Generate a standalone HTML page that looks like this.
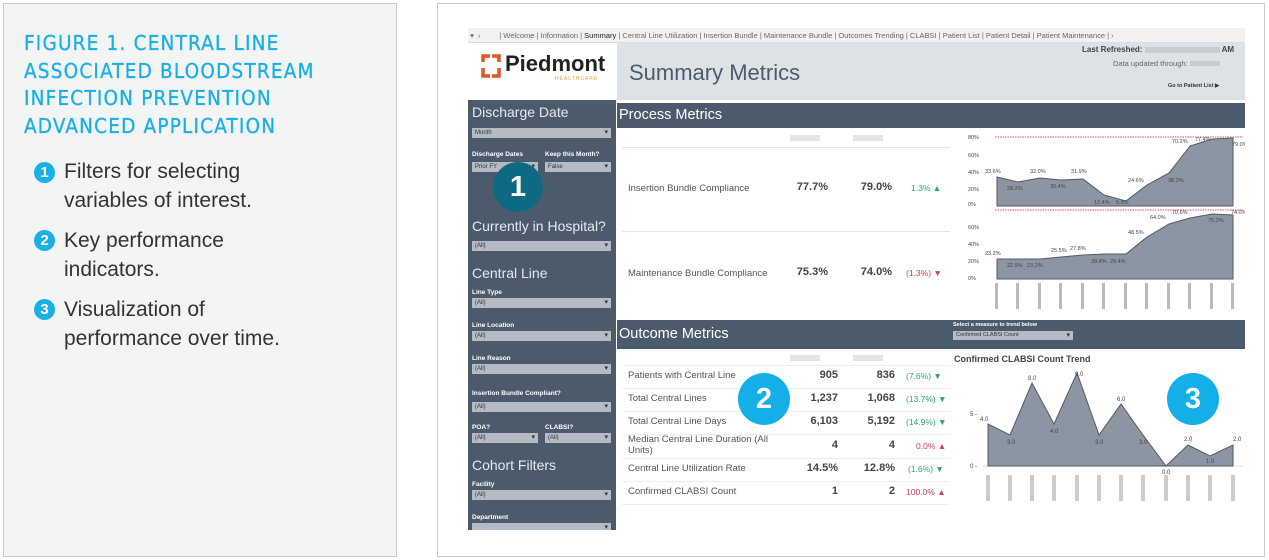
<!DOCTYPE html>
<html><head><meta charset="utf-8"><style>
*{margin:0;padding:0;box-sizing:border-box}
body{width:1269px;height:560px;background:#fff;position:relative;overflow:hidden;font-family:"Liberation Sans",sans-serif}
.a{position:absolute}
.lp{left:3px;top:3px;width:394px;height:554px;background:#f3f4f4;border:1px solid #c8cacb}
.ttl{left:24px;top:30px;color:#1ab0e6;font-size:20.5px;line-height:27.5px;letter-spacing:1.2px;font-family:"DejaVu Sans Condensed","Liberation Sans",sans-serif;-webkit-text-stroke:0.3px #1ab0e6}
.li{left:64px;color:#333;font-size:21px;line-height:29px}
.bul{left:34px;width:21px;height:21px;border-radius:50%;background:#1ab0e6;color:#fff;font-size:15px;font-weight:bold;text-align:center;line-height:21px}
.rp{left:437px;top:3px;width:828px;height:554px;border:1px solid #c8cacb;background:#fff}
.side{left:468px;top:100px;width:148px;height:430px;background:#4b5b6b}
.sh{color:#e6eaf0;font-size:14px;left:472px}
.sl{color:#fff;font-size:6.5px;font-weight:bold;left:472px}
.dd{background:#b4bbc3;height:10px;font-size:6px;color:#333;padding-left:3px;line-height:10px}
.dd:after{content:"▾";position:absolute;right:3px;font-size:7px}
.bar{background:#4b5b6b;color:#fff;font-size:14.5px;padding-left:2px}
.t{font-size:9.5px;color:#555}
.n{font-size:11px;font-weight:bold;color:#444;text-align:right}
.g{color:#2aa86a;font-size:8.5px}.r{color:#d04050;font-size:8.5px}
.ci{width:48px;height:48px;border-radius:50%;color:#fff;font-weight:bold;font-size:29px;text-align:center;line-height:48px}
.row{left:622px;width:328px;border-top:1px solid #eee;height:23px}
</style></head><body>
<div class="a lp"></div>
<div class="a ttl">FIGURE 1. CENTRAL LINE<br>ASSOCIATED BLOODSTREAM<br>INFECTION PREVENTION<br>ADVANCED APPLICATION</div>
<div class="a bul" style="top:162px">1</div><div class="a li" style="top:157px">Filters for selecting<br>variables of interest.</div>
<div class="a bul" style="top:230px">2</div><div class="a li" style="top:226px">Key performance<br>indicators.</div>
<div class="a bul" style="top:299px">3</div><div class="a li" style="top:295px">Visualization of<br>performance over time.</div>

<div class="a rp"></div>
<div class="a" style="left:468px;top:28px;width:777px;height:15px;background:#f2f2f2;border-bottom:1px solid #ddd;font-size:7.5px;color:#666;line-height:15px;white-space:nowrap;overflow:hidden">
&nbsp;▾ &nbsp;‹ &nbsp;&nbsp;&nbsp;&nbsp;&nbsp;&nbsp;&nbsp;&nbsp;| Welcome | Information | <span style="color:#222">Summary</span> | Central Line Utilization | Insertion Bundle | Maintenance Bundle | Outcomes Trending | CLABSI | Patient List | Patient Detail | Patient Maintenance | ›</div>
<div class="a" style="left:468px;top:43px;width:149px;height:57px;background:#fff"></div>
<div class="a" style="left:617px;top:43px;width:628px;height:57px;background:#dde2e7"></div>
<svg class="a" style="left:481px;top:54px" width="20" height="24"><path d="M2 8V2h7M11 2h7v6M18 14v8h-7M9 22H2v-8" stroke="#e0552a" stroke-width="3.5" fill="none"/></svg>
<div class="a" style="left:505px;top:51px;font-size:22px;font-weight:bold;color:#222">Piedmont</div>
<div class="a" style="left:555px;top:76px;font-size:5px;color:#e8a040;letter-spacing:1px">HEALTHCARE</div>
<div class="a" style="left:629px;top:60px;font-size:22px;color:#4b5b6b">Summary Metrics</div>
<div class="a" style="left:1082px;top:45px;font-size:8px;font-weight:bold;color:#444">Last Refreshed: <span style="display:inline-block;width:75px;height:6px;background:#c8ccd2;vertical-align:middle"></span> AM</div>
<div class="a" style="left:1113px;top:59px;font-size:7.5px;color:#666">Data updated through: <span style="display:inline-block;width:30px;height:5px;background:#c8ccd2"></span></div>
<div class="a" style="left:1168px;top:83px;font-size:5.5px;color:#333;font-weight:bold">Go to Patient List ▶</div>

<div class="a side"></div>
<div class="a sh" style="top:104px">Discharge Date</div>
<div class="a dd" style="left:472px;top:128px;width:139px">Month</div>
<div class="a sl" style="top:151px">Discharge Dates</div><div class="a sl" style="left:545px;top:151px">Keep this Month?</div>
<div class="a dd" style="left:472px;top:162px;width:66px">Prior FY</div><div class="a dd" style="left:545px;top:162px;width:66px">False</div>
<div class="a sh" style="top:218px">Currently in Hospital?</div>
<div class="a dd" style="left:472px;top:241px;width:139px">(All)</div>
<div class="a sh" style="top:265px">Central Line</div>
<div class="a sl" style="top:289px">Line Type</div><div class="a dd" style="left:472px;top:298px;width:139px">(All)</div>
<div class="a sl" style="top:322px">Line Location</div><div class="a dd" style="left:472px;top:331px;width:139px">(All)</div>
<div class="a sl" style="top:355px">Line Reason</div><div class="a dd" style="left:472px;top:364px;width:139px">(All)</div>
<div class="a sl" style="top:390px">Insertion Bundle Compliant?</div><div class="a dd" style="left:472px;top:402px;width:139px">(All)</div>
<div class="a sl" style="top:424px">POA?</div><div class="a sl" style="left:545px;top:424px">CLABSI?</div>
<div class="a dd" style="left:472px;top:433px;width:66px">(All)</div><div class="a dd" style="left:545px;top:433px;width:66px">(All)</div>
<div class="a sh" style="top:457px">Cohort Filters</div>
<div class="a sl" style="top:481px">Facility</div><div class="a dd" style="left:472px;top:490px;width:139px">(All)</div>
<div class="a sl" style="top:514px">Department</div><div class="a dd" style="left:472px;top:523px;width:139px;height:7px"></div>

<div class="a bar" style="left:617px;top:103px;width:628px;height:25px;line-height:25px">Process Metrics</div>
<div class="a" style="left:622px;top:147px;width:328px;border-top:1px solid #e6e6e6"></div>
<div class="a" style="left:622px;top:231px;width:328px;border-top:1px solid #e6e6e6"></div>
<div class="a" style="left:790px;top:135px;width:30px;height:6px;background:#e4e4e4"></div><div class="a" style="left:853px;top:135px;width:30px;height:6px;background:#e4e4e4"></div>
<div class="a t" style="left:628px;top:183px">Insertion Bundle Compliance</div>
<div class="a n" style="left:790px;top:181px;width:38px">77.7%</div><div class="a n" style="left:852px;top:181px;width:40px">79.0%</div><div class="a g" style="left:911px;top:183px">1.3% ▲</div>
<div class="a t" style="left:628px;top:268px">Maintenance Bundle Compliance</div>
<div class="a n" style="left:790px;top:266px;width:38px">75.3%</div><div class="a n" style="left:852px;top:266px;width:40px">74.0%</div><div class="a r" style="left:906px;top:268px">(1.3%) ▼</div>

<svg class="a" style="left:955px;top:130px" width="290" height="185" font-family="Liberation Sans" font-size="5.5" fill="#444">
<g transform="translate(-955,-130)">
<line x1="995" y1="137" x2="1243" y2="137" stroke="#e8506a" stroke-dasharray="1.5,1"/>
<line x1="995" y1="210" x2="1243" y2="210" stroke="#e8506a" stroke-dasharray="1.5,1"/>
<polygon points="997,206 997,177 1018,182 1040,178 1061,180 1083,179 1104,195 1126,201 1147,185 1169,173 1190,146 1212,139 1233,138 1233,206" fill="#8c96a3" stroke="#505a68"/>
<polygon points="997,279 997,259 1018,259 1040,259 1061,257 1083,255 1104,254 1126,254 1147,237 1169,224 1190,218 1212,214 1233,215 1233,279" fill="#8c96a3" stroke="#505a68"/>
<text x="968" y="139">80%</text><text x="968" y="157">60%</text><text x="968" y="174">40%</text><text x="968" y="191">20%</text><text x="968" y="206">0%</text>
<text x="968" y="229">60%</text><text x="968" y="246">40%</text><text x="968" y="263">20%</text><text x="968" y="280">0%</text>
<text x="985" y="173">33.6%</text><text x="1007" y="190">28.2%</text><text x="1030" y="173">32.0%</text><text x="1050" y="188">30.4%</text><text x="1071" y="173">31.9%</text><text x="1094" y="204">12.4%</text><text x="1116" y="204">5.6%</text><text x="1128" y="182">24.6%</text><text x="1168" y="182">38.3%</text><text x="1172" y="143">70.2%</text><text x="1195" y="141">77.4%</text><text x="1232" y="146">79.0%</text>
<text x="985" y="255">23.2%</text><text x="1007" y="267">22.9%</text><text x="1027" y="267">23.2%</text><text x="1051" y="252">25.5%</text><text x="1070" y="250">27.8%</text><text x="1091" y="263">28.4%</text><text x="1110" y="263">29.4%</text><text x="1128" y="234">48.5%</text><text x="1150" y="219">64.0%</text><text x="1172" y="214">70.6%</text><text x="1208" y="222">75.3%</text><text x="1231" y="214">74.0%</text>
<g fill="#bbb"><rect x="995" y="283" width="3" height="26"/><rect x="1016" y="283" width="3" height="26"/><rect x="1038" y="283" width="3" height="26"/><rect x="1059" y="283" width="3" height="26"/><rect x="1081" y="283" width="3" height="26"/><rect x="1102" y="283" width="3" height="26"/><rect x="1124" y="283" width="3" height="26"/><rect x="1145" y="283" width="3" height="26"/><rect x="1167" y="283" width="3" height="26"/><rect x="1188" y="283" width="3" height="26"/><rect x="1210" y="283" width="3" height="26"/><rect x="1231" y="283" width="3" height="26"/></g>
</g></svg>

<div class="a bar" style="left:617px;top:320px;width:628px;height:29px;line-height:29px">Outcome Metrics</div>
<div class="a" style="left:953px;top:322px;font-size:5.5px;color:#fff;font-weight:bold">Select a measure to trend below</div>
<div class="a dd" style="left:953px;top:331px;width:120px;height:9px;line-height:9px;font-size:5.5px">Confirmed CLABSI Count</div>
<div class="a" style="left:790px;top:355px;width:30px;height:6px;background:#e4e4e4"></div><div class="a" style="left:853px;top:355px;width:30px;height:6px;background:#e4e4e4"></div>
<div class="a row" style="top:365px"></div><div class="a row" style="top:388px"></div><div class="a row" style="top:411px"></div><div class="a row" style="top:434px"></div><div class="a row" style="top:458px"></div><div class="a row" style="top:481px"></div><div class="a row" style="top:504px;height:1px"></div>
<div class="a t" style="left:628px;top:370px">Patients with Central Line</div><div class="a n" style="left:790px;top:369px;width:48px">905</div><div class="a n" style="left:850px;top:369px;width:45px">836</div><div class="a g" style="left:906px;top:371px">(7.6%) ▼</div>
<div class="a t" style="left:628px;top:393px">Total Central Lines</div><div class="a n" style="left:790px;top:392px;width:48px">1,237</div><div class="a n" style="left:850px;top:392px;width:45px">1,068</div><div class="a g" style="left:906px;top:394px">(13.7%) ▼</div>
<div class="a t" style="left:628px;top:416px">Total Central Line Days</div><div class="a n" style="left:790px;top:415px;width:48px">6,103</div><div class="a n" style="left:850px;top:415px;width:45px">5,192</div><div class="a g" style="left:906px;top:417px">(14.9%) ▼</div>
<div class="a t" style="left:628px;top:434px;line-height:11px">Median Central Line Duration (All<br>Units)</div><div class="a n" style="left:790px;top:439px;width:48px">4</div><div class="a n" style="left:850px;top:439px;width:45px">4</div><div class="a r" style="left:916px;top:441px">0.0% ▲</div>
<div class="a t" style="left:628px;top:463px">Central Line Utilization Rate</div><div class="a n" style="left:790px;top:462px;width:48px">14.5%</div><div class="a n" style="left:850px;top:462px;width:45px">12.8%</div><div class="a g" style="left:908px;top:464px">(1.6%) ▼</div>
<div class="a t" style="left:628px;top:486px">Confirmed CLABSI Count</div><div class="a n" style="left:790px;top:485px;width:48px">1</div><div class="a n" style="left:850px;top:485px;width:45px">2</div><div class="a r" style="left:906px;top:487px">100.0% ▲</div>

<div class="a" style="left:954px;top:354px;font-size:9px;font-weight:bold;color:#444">Confirmed CLABSI Count Trend</div>
<svg class="a" style="left:955px;top:360px" width="290" height="170" font-family="Liberation Sans" font-size="6" fill="#444">
<g transform="translate(-955,-360)">
<line x1="983" y1="466" x2="1243" y2="466" stroke="#ddd"/>
<polygon points="988,466 988,424 1010,435 1032,383 1054,424 1077,373 1099,435 1121,404 1143,435 1166,466 1188,445 1210,456 1233,445 1233,466" fill="#8c96a3" stroke="#505a68"/>
<text x="970" y="416">5 -</text><text x="970" y="468">0 -</text>
<text x="980" y="421">4.0</text><text x="1007" y="444">3.0</text><text x="1028" y="380">8.0</text><text x="1050" y="433">4.0</text><text x="1075" y="376">9.0</text><text x="1095" y="444">3.0</text><text x="1117" y="401">6.0</text><text x="1139" y="444">3.0</text><text x="1162" y="474">0.0</text><text x="1184" y="441">2.0</text><text x="1206" y="463">1.0</text><text x="1233" y="441">2.0</text>
<g fill="#ccc"><rect x="986" y="475" width="4" height="26"/><rect x="1008" y="475" width="4" height="26"/><rect x="1030" y="475" width="4" height="26"/><rect x="1052" y="475" width="4" height="26"/><rect x="1075" y="475" width="4" height="26"/><rect x="1097" y="475" width="4" height="26"/><rect x="1119" y="475" width="4" height="26"/><rect x="1141" y="475" width="4" height="26"/><rect x="1164" y="475" width="4" height="26"/><rect x="1186" y="475" width="4" height="26"/><rect x="1208" y="475" width="4" height="26"/><rect x="1231" y="475" width="4" height="26"/></g>
</g></svg>

<div class="a ci" style="left:493px;top:162px;background:#0e6a82;width:50px;height:50px;line-height:50px">1</div>
<div class="a ci" style="left:738px;top:373px;background:#14aee8;width:52px;height:52px;line-height:52px">2</div>
<div class="a ci" style="left:1167px;top:373px;background:#14aee8;width:52px;height:52px;line-height:52px">3</div>
</body></html>
